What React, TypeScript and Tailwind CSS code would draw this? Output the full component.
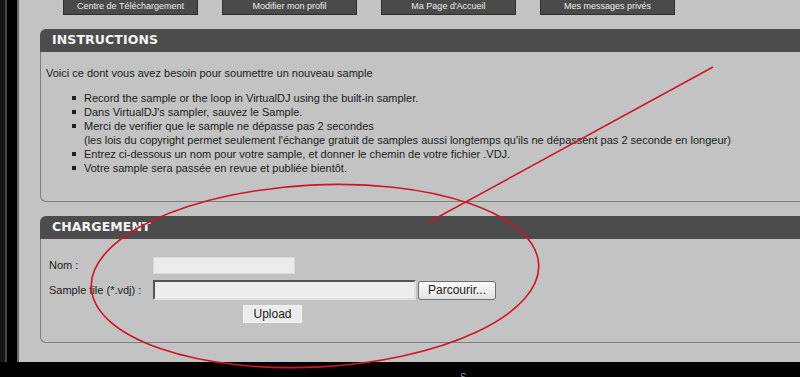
const navLinks = [
  "Centre de Téléchargement",
  "Modifier mon profil",
  "Ma Page d'Accueil",
  "Mes messages privés",
];

const steps = [
  "Record the sample or the loop in VirtualDJ using the built-in sampler.",
  "Dans VirtualDJ's sampler, sauvez le Sample.",
  "Merci de verifier que le sample ne dépasse pas 2 secondes",
  "Entrez ci-dessous un nom pour votre sample, et donner le chemin de votre fichier .VDJ.",
  "Votre sample sera passée en revue et publiée bientôt.",
];

const Panel = ({ title, children, bodyClass }: { title: string; children: React.ReactNode; bodyClass: string }) => (
  <div className="w-[790px] ml-[21px]">
    <div className="h-[23px] bg-[#4b4c4b] rounded-tl-[6px] pl-[12px] flex items-center font-['DejaVu_Sans',sans-serif] font-bold text-[12.5px] text-[#f4f4f4] tracking-[0.1px]">
      {title}
    </div>
    <div className={`border-l border-b border-[#7d7d7d] rounded-bl-[6px] ${bodyClass}`}>{children}</div>
  </div>
);

export default function App() {
  return (
    <div className="relative w-[800px] h-[377px] overflow-hidden bg-black flex font-['Liberation_Sans',Arial,sans-serif]">
      {/* left frame strip */}
      <div className="flex h-[362px] shrink-0">
        <div className="w-[5px] bg-[#161616]" />
        <div className="w-[2px] bg-[#474747]" />
        <div className="w-[10px] bg-black" />
        <div className="w-[2px] bg-[#6a6a6a]" />
      </div>

      <div className="flex-1 flex flex-col">
        <div className="h-[362px] shrink-0 bg-[#c3c3c3] overflow-hidden">
          {/* ── NAV ── */}
          <div className="flex gap-[24px] pl-[44px]">
            {navLinks.map((label) => (
              <div
                key={label}
                className="w-[135px] h-[15px] bg-[#4a4a4a] border border-t-0 border-[#2e2e2e] flex items-start justify-center pt-[1px] text-[9px] leading-[11px] text-[#eeeeee]"
              >
                {label}
              </div>
            ))}
          </div>

          {/* ── INSTRUCTIONS ── */}
          <div className="mt-[14px]">
            <Panel title="INSTRUCTIONS" bodyClass="h-[150px] pt-[14px] pl-[5px] text-[11px] leading-[14px] text-[#1b1b1b]">
              <p>Voici ce dont vous avez besoin pour soumettre un nouveau sample</p>
              <ul className="mt-[11px] pl-[26px]">
                {steps.map((step, i) => (
                  <li key={i} className="flex">
                    <span className="w-[12px] shrink-0 flex items-center h-[14px]">
                      <span className="w-[4px] h-[4px] bg-[#222]" />
                    </span>
                    <span>
                      {step}
                      {i === 2 && (
                        <>
                          <br />
                          (les lois du copyright permet seulement l'échange gratuit de samples aussi longtemps qu'ils ne dépassent pas 2 seconde en longeur)
                        </>
                      )}
                    </span>
                  </li>
                ))}
              </ul>
            </Panel>
          </div>

          {/* ── CHARGEMENT ── */}
          <div className="mt-[14px]">
            <Panel title="CHARGEMENT" bodyClass="h-[104px] pt-[18px] pl-[8px] text-[11px] text-[#1b1b1b]">
              <div className="w-[447px] flex flex-col">
                <div className="flex items-center h-[17px]">
                  <span className="w-[104px]">Nom :</span>
                  <div className="w-[142px] h-[17px] bg-[#ececec] border border-[#dadada]" />
                </div>
                <div className="flex items-center h-[20px] mt-[6px]">
                  <span className="w-[104px]">Sample file (*.vdj) :</span>
                  <div className="w-[263px] h-[20px] bg-[#ededed] border-2 border-t-[#555] border-l-[#555] border-r-[#e0e0e0] border-b-[#e0e0e0]" />
                  <button className="ml-[2px] w-[78px] h-[19px] rounded-[3px] border border-[#6e6e6e] bg-gradient-to-b from-[#fafafa] to-[#e2e2e2] text-[12px] leading-[16px] text-[#222]">
                    Parcourir...
                  </button>
                </div>
                <div className="flex justify-center mt-[5px]">
                  <button className="w-[59px] h-[18px] bg-[#ececec] border border-[#f2f2f2] text-[12px] leading-[16px] text-[#222]">
                    Upload
                  </button>
                </div>
              </div>
            </Panel>
          </div>
        </div>
        <div className="pl-[441px] text-[10px] leading-[14px] text-[#9a9a9a] mt-[9px]">S</div>
      </div>

      {/* red hand-drawn annotation */}
      <svg className="absolute inset-0 pointer-events-none" width="800" height="377" viewBox="0 0 800 377">
        <ellipse cx="315" cy="276" rx="224" ry="91" transform="rotate(-3 315 276)" fill="none" stroke="#d0142a" strokeWidth="1.6" />
        <line x1="713" y1="67" x2="429" y2="222" stroke="#d0142a" strokeWidth="1.5" />
      </svg>
    </div>
  );
}
